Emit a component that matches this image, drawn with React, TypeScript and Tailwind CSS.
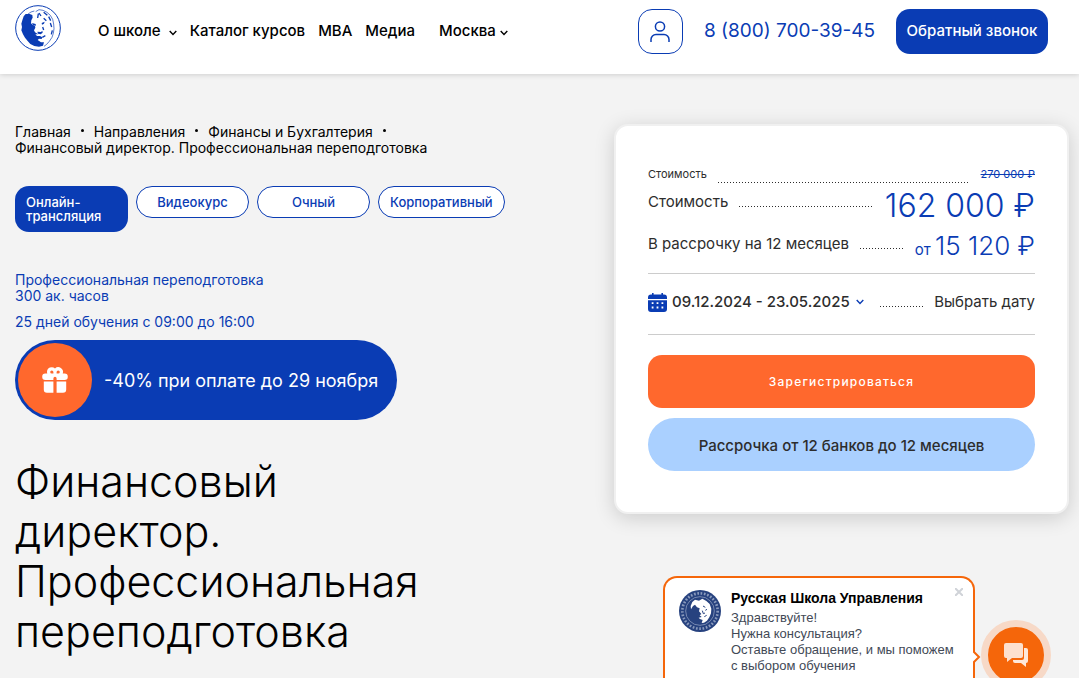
import type { ReactNode } from 'react';
import { HiGift } from 'react-icons/hi';

type PriceRowProps = {
  label: string;
  small?: boolean;
  children: ReactNode;
};

const crumbs = ['Главная', 'Направления', 'Финансы и Бухгалтерия'];

const formats = ['Видеокурс', 'Очный', 'Корпоративный'];

const LogoIcon = () => (
  <svg viewBox="0 0 138 138" className="size-[46px] text-[#0a3cb4]" fill="currentColor" aria-hidden="true">
    <circle cx="69" cy="69" r="67" fill="none" stroke="currentColor" strokeWidth="3" />
    <path d="M32 27 26 34 22 46 19 56 21 66 19 76 24 88 30 98 38 108 46 117 58 123 72 125 84 122 87 112 78 112 68 105 72 101 80 102 82 97 75 93 66 93 61 88 70 88 60 82 57 76 61 68 60 62 54 60 48 55 49 46 53 38 52 30 44 27z" />
    <path d="M51 54l11 3 1 5-9-2zM67 80l11 1 4-4 1 6-6 5-8-2zM80 54l9-4-2 6-6 3z" />
    <g fill="none" stroke="currentColor">
      <path d="M38 28 48 21l10-3M62 20l10-6 12 2 12 6 10 9 7 12 3 14 1 14-2 14-4 12-8 12-8 9-8 6" strokeWidth="2" />
      <path d="M70 26l-2 13M72 24l6 9M86 22l11 9M86 40l8 7M101 35l6 12M106 54l4 12M83 66l3 9M82 97l9-5M112 76l-3 12" strokeWidth="4" />
    </g>
  </svg>
);

const ChatLogo = () => (
  <svg viewBox="0 0 126 126" className="size-[42px] shrink-0" aria-hidden="true">
    <circle cx="63" cy="63" r="63" fill="#27427f" />
    <circle cx="63" cy="63" r="53" fill="none" stroke="#cdd5e6" strokeWidth="8" strokeDasharray="5 5" opacity=".6" />
    <circle cx="63" cy="63" r="43" fill="none" stroke="#9dabc9" strokeWidth="2" />
    <path
      d="M48 29 60 32 70 26 82 33 92 42 97 56 96 70 91 82 84 92 75 98 68 99 71 90 63 87 59 83 68 81 62 76 67 72 60 64 62 55 54 52 48 44 42 48 36 58 35 48 40 36z"
      fill="#fff"
    />
    <path d="M72 48l7 4M70 62l3 9 5-2M84 58l-5 3M76 80l7-4" fill="none" stroke="#27427f" strokeWidth="3" />
  </svg>
);

const Chevron = ({ className }: { className?: string }) => (
  <svg viewBox="0 0 8 6" className={className} fill="none" stroke="currentColor" strokeWidth="1.4" aria-hidden="true">
    <path d="M.7 1 4 4.400 7.300 1" />
  </svg>
);

const UserIcon = () => (
  <svg viewBox="0 0 20 22" className="h-[22px] w-5" fill="none" stroke="currentColor" strokeWidth="1.5" aria-hidden="true">
    <circle cx="10" cy="5.5" r="4.6" />
    <path d="M1 21v-2.500a5 5 0 0 1 5-5h8a5 5 0 0 1 5 5V21" />
  </svg>
);

const CalendarIcon = () => (
  <svg viewBox="0 0 19 19" className="size-[19px] shrink-0 text-[#0a3cb4]" fill="currentColor" aria-hidden="true">
    <path d="M4 0h1.6v1.6h7.8V0H15v1.6h1a3 3 0 0 1 3 3V6H0V4.600a3 3 0 0 1 3-3h1zM0 7.300h19V16a3 3 0 0 1-3 3H3a3 3 0 0 1-3-3z" />
    <path
      d="M3.700 9.200h1.800V11H3.700zM8.600 9.200h1.800V11H8.600zM13.500 9.200h1.800V11h-1.800zM3.700 13.600h1.800v1.800H3.700zM8.600 13.600h1.800v1.800H8.600zM13.500 13.600h1.800v1.800h-1.800z"
      fill="#fff"
    />
  </svg>
);

const ChatIcon = () => (
  <svg viewBox="0 0 24 24" className="size-6" fill="#fff" aria-hidden="true">
    <path d="M2 0h15a2 2 0 0 1 2 2v11a2 2 0 0 1-2 2H8l-5 4v-4H2a2 2 0 0 1-2-2V2a2 2 0 0 1 2-2z" opacity=".8" />
    <path d="M20 5h2a2 2 0 0 1 2 2v11a2 2 0 0 1-2 2v4l-5-4h-6a2 2 0 0 1-2-2v-1h9a2 2 0 0 0 2-2z" opacity=".85" />
  </svg>
);

const Dots = () => (
  <span className="h-px min-w-0 flex-1 bg-[repeating-linear-gradient(90deg,#2d2d2d_0_1px,transparent_1px_3px)]" />
);

const PriceRow = ({ label, small, children }: PriceRowProps) => (
  <div className={small ? 'flex h-5 gap-[11px] text-[11px] leading-4' : 'flex gap-[11px] text-[15px] leading-8'}>
    <span>{label}</span>
    <span className={small ? 'flex flex-1 pt-4' : 'flex flex-1 pt-5'}>
      <Dots />
    </span>
    <span className="text-[#0a3cb4]">{children}</span>
  </div>
);

const Header = () => (
  <header className="relative bg-white pb-[11px] shadow-[0_0_6px_rgba(0,0,0,0.2)]">
    <div className="flex h-[63px] items-center pr-[31px] pl-[15px]">
      <a href="#" aria-label="Русская Школа Управления" className="pb-[7px]">
        <LogoIcon />
      </a>
      <nav className="ml-[37px] flex items-center gap-[13px] text-[15px] font-medium">
        <button type="button" className="flex items-center gap-2">
          О школе
          <Chevron className="mt-[3px] h-[6px] w-2" />
        </button>
        <a href="#">Каталог курсов</a>
        <a href="#">MBA</a>
        <a href="#">Медиа</a>
      </nav>
      <label className="ml-6 flex items-center gap-1 text-[15px] font-medium">
        <select aria-label="Город" className="appearance-none">
          <option>Москва</option>
        </select>
        <Chevron className="mt-[3px] h-[6px] w-2" />
      </label>
      <div className="ml-auto flex items-center gap-[21px] text-[#0a3cb4]">
        <button
          type="button"
          aria-label="Личный кабинет"
          className="flex size-[45px] items-center justify-center rounded-[14px] border border-[#0a3cb4]"
        >
          <UserIcon />
        </button>
        <a href="tel:88007003945" className="text-[19px]">
          8 (800) 700-39-45
        </a>
        <button type="button" className="h-[45px] w-[152px] rounded-[14px] bg-[#0a3cb4] text-[15px] font-medium text-white">
          Обратный звонок
        </button>
      </div>
    </div>
  </header>
);

const CourseInfo = () => (
  <section className="min-w-0 flex-1">
    <nav className="text-[14px] leading-4">
      <div className="flex flex-wrap">
        {crumbs.map((crumb) => (
          <span key={crumb} className="flex">
            <a href="#">{crumb}</a>
            <span className="mx-[10px] mt-[5px] size-[3px] rounded-full bg-black" />
          </span>
        ))}
      </div>
      <span>Финансовый директор. Профессиональная переподготовка</span>
    </nav>

    <div className="mt-[30px] flex items-start gap-2 text-[13px] leading-[14px] font-medium text-[#0a3cb4]">
      <button type="button" className="h-[46px] w-[113px] rounded-[14px] bg-[#0a3cb4] px-[11px] text-left text-white">
        Онлайн-трансляция
      </button>
      {formats.map((format) => (
        <button key={format} type="button" className="h-8 min-w-[113px] rounded-full border border-[#0a3cb4] bg-white px-[11px]">
          {format}
        </button>
      ))}
    </div>

    <div className="mt-10 text-[14px] leading-4 text-[#0a3cb4]">
      <p>Профессиональная переподготовка</p>
      <p>300 ак. часов</p>
      <p className="mt-[10px]">25 дней обучения с 09:00 до 16:00</p>
    </div>

    <div className="mt-[10px] flex h-20 w-fit items-center gap-3 rounded-full bg-[#0a3cb4] pr-[19px] pl-[3px] text-[18px] text-white">
      <span className="flex size-[74px] items-center justify-center rounded-full bg-[#ff682d]">
        <HiGift className="size-8" />
      </span>
      -40% при оплате до 29 ноября
    </div>

    <h1 className="mt-9 max-w-[460px] text-[43px] leading-[50px] font-light">
      Финансовый директор. Профессиональная переподготовка
    </h1>
  </section>
);

const PriceCard = () => (
  <aside className="w-[455px] shrink-0 rounded-[14px] border-2 border-[#f0f0f0] bg-white px-8 pt-10 pb-[41px] text-[#2d2d2d] shadow-[0_4px_20px_rgba(0,0,0,0.16)]">
    <PriceRow label="Стоимость" small>
      <s>270 000 ₽</s>
    </PriceRow>
    <PriceRow label="Стоимость">
      <span className="text-[32px] leading-10 font-light">162 000 ₽</span>
    </PriceRow>
    <PriceRow label="В рассрочку на 12 месяцев">
      от <span className="text-[26px] leading-9 font-light">15 120 ₽</span>
    </PriceRow>

    <div className="mt-[7px] flex h-[62px] items-center border-y border-[#ccc] pb-1 text-[15px]">
      <CalendarIcon />
      <label className="ml-[5px] flex items-center gap-[6px] font-medium">
        <select aria-label="Даты обучения" className="appearance-none">
          <option>09.12.2024 - 23.05.2025</option>
        </select>
        <Chevron className="h-[6px] w-2 text-[#0a3cb4]" />
      </label>
      <span className="mr-[11px] ml-4 flex flex-1 pt-2">
        <Dots />
      </span>
      <a href="#">Выбрать дату</a>
    </div>

    <button type="button" className="mt-5 h-[53px] w-full rounded-[14px] bg-[#ff682d] text-[12px] font-medium tracking-widest text-white">
      Зарегистрироваться
    </button>
    <button type="button" className="mt-[10px] h-[53px] w-full rounded-full bg-[#aad0ff] pt-1 text-[15px] font-medium">
      Рассрочка от 12 банков до 12 месяцев
    </button>
  </aside>
);

const ChatWidget = () => (
  <div className="fixed right-7 bottom-0 flex h-[102px] items-start gap-[6px] font-['Liberation_Sans',sans-serif]">
    <div className="relative flex h-full w-[312px] gap-[10px] rounded-t-[14px] border-2 border-b-0 border-[#f5660a] bg-white pt-3 pl-[14px] text-[13px] leading-4">
      <ChatLogo />
      <div className="text-[#424956]">
        <p className="mb-1 text-[14px] font-bold text-black">Русская Школа Управления</p>
        <p>Здравствуйте!</p>
        <p>Нужна консультация?</p>
        <p>
          Оставьте обращение, и мы поможем
          <br />с выбором обучения
        </p>
      </div>
      <button type="button" aria-label="Закрыть" className="absolute top-[10px] right-[10px] text-[#d0d3d8]">
        <svg viewBox="0 0 8 8" className="size-2" stroke="currentColor" strokeWidth="2" aria-hidden="true">
          <path d="m0 0 8 8M8 0 0 8" />
        </svg>
      </button>
      <svg viewBox="0 0 8 12" className="absolute top-[73px] -right-[8px] h-3 w-2" fill="#fff" stroke="#f5660a" strokeWidth="2" aria-hidden="true">
        <path d="M0 0 6 6 0 12" />
      </svg>
    </div>
    <button
      type="button"
      aria-label="Открыть чат"
      className="mt-[44px] flex size-[70px] items-center justify-center rounded-full border-[7px] border-[#f7d9c7] bg-[#f5660a]"
    >
      <ChatIcon />
    </button>
  </div>
);

const App = () => (
  <div className="min-h-screen bg-[#f3f3f3] font-[Inter,sans-serif] text-black">
    <Header />
    <main className="flex items-start gap-4 pt-[50px] pr-[10px] pl-[15px]">
      <CourseInfo />
      <PriceCard />
    </main>
    <ChatWidget />
  </div>
);

export default App;
